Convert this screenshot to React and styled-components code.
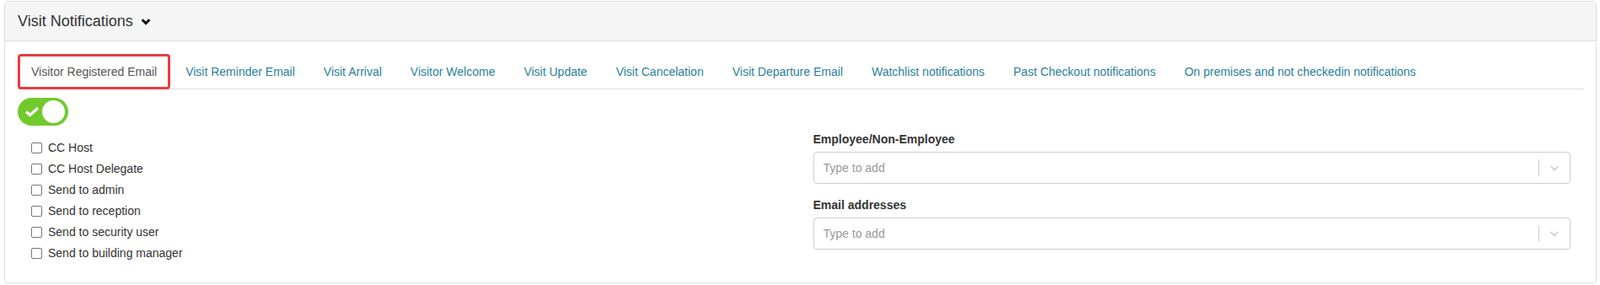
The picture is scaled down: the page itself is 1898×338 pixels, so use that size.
import React, { useState } from "react";
import styled, { createGlobalStyle } from "styled-components";

const GlobalStyle = createGlobalStyle`
  body {
    margin: 0;
    background: #fff;
    font-family: "Liberation Sans", Arial, sans-serif;
    font-size: 14px;
    line-height: 20px;
    color: #333;
  }
  * { box-sizing: border-box; }
`;

const Page = styled.div`
  padding: 1px 4px 0 5px;
`;

const Panel = styled.div`
  border: 1px solid #ddd;
  border-radius: 4px;
  background: #fff;
  overflow: hidden;
`;

const Heading = styled.div`
  height: 47px;
  padding: 0 15px;
  display: flex;
  align-items: center;
  gap: 9px;
  background: #f5f5f5;
  border-bottom: 1px solid #ddd;
  font-size: 18px;
  color: #333;
`;

const Body = styled.div`
  padding: 15px;
`;

const TabList = styled.ul`
  display: flex;
  list-style: none;
  margin: 0;
  padding: 0;
  border-bottom: 1px solid #ddd;
`;

const Tab = styled.li`
  margin: 0 2px -1px 0;
  padding: ${({ $active }) => ($active ? "8px 13px" : "10px 15px")};
  border: ${({ $active }) => ($active ? "3px solid #e83c40" : "1px solid transparent")};
  border-radius: 4px;
  color: ${({ $active }) => ($active ? "#555" : "#2a7f9f")};
  white-space: nowrap;
  cursor: pointer;
`;

const Toggle = styled.div`
  margin-top: 10px;
  width: 60px;
  height: 33px;
  border-radius: 17px;
  background: #72c92c;
  display: flex;
  align-items: center;
  justify-content: space-between;
  padding: 0 4px 0 8px;
`;

const Knob = styled.div`
  width: 27px;
  height: 27px;
  border-radius: 50%;
  background: #fff;
`;

const Row = styled.div`
  display: grid;
  grid-template-columns: 1fr 1fr;
  margin: 6px -15px 0;
`;

const Col = styled.div`
  padding: 0 ${({ $wide }) => ($wide ? "30px" : "15px")} 0 15px;
`;

const CheckList = styled.div`
  margin: 10px 0;
  padding-left: 15px;
  display: flex;
  flex-direction: column;
  gap: 5px;
`;

const CheckRow = styled.label`
  display: flex;
  align-items: center;
  height: 20px;
  color: #333;
`;

const Box = styled.input`
  appearance: none;
  width: 13px;
  height: 13px;
  margin: 0 7px 0 1px;
  border: 1px solid #767676;
  border-radius: 2px;
  background: #fff;
`;

const FormGroup = styled.div`
  margin-bottom: 15px;
`;

const Label = styled.div`
  font-weight: bold;
  margin-bottom: 5px;
`;

const Select = styled.div`
  height: 38px;
  border: 1px solid #ccc;
  border-radius: 4px;
  display: flex;
  align-items: center;
`;

const Placeholder = styled.div`
  flex: 1;
  padding-left: 11px;
  color: #999;
`;

const Separator = styled.span`
  width: 1px;
  height: 20px;
  background: #ccc;
`;

const Indicator = styled.div`
  padding: 8px;
  display: flex;
  color: #ccc;
`;

const tabs = [
  "Visitor Registered Email",
  "Visit Reminder Email",
  "Visit Arrival",
  "Visitor Welcome",
  "Visit Update",
  "Visit Cancelation",
  "Visit Departure Email",
  "Watchlist notifications",
  "Past Checkout notifications",
  "On premises and not checkedin notifications",
];

const options = [
  "CC Host",
  "CC Host Delegate",
  "Send to admin",
  "Send to reception",
  "Send to security user",
  "Send to building manager",
];

function ChevronDown() {
  return (
    <svg width="12" height="9" viewBox="0 0 12 9">
      <path d="M1.6 2.2 L6 6.6 L10.4 2.2" fill="none" stroke="#111" strokeWidth="3" />
    </svg>
  );
}

function SelectBox() {
  return (
    <Select>
      <Placeholder>Type to add</Placeholder>
      <Separator />
      <Indicator>
        <svg width="20" height="20" viewBox="0 0 20 20">
          <path d="M5.5 8 L10 12.5 L14.5 8" fill="none" stroke="currentColor" strokeWidth="1.6" />
        </svg>
      </Indicator>
    </Select>
  );
}

export default function App() {
  const [active, setActive] = useState(0);

  return (
    <Page>
      <GlobalStyle />
      <Panel>
        <Heading>
          Visit Notifications <ChevronDown />
        </Heading>
        <Body>
          <TabList>
            {tabs.map((t, i) => (
              <Tab key={t} $active={i === active} onClick={() => setActive(i)}>
                {t}
              </Tab>
            ))}
          </TabList>
          <Toggle>
            <svg width="18" height="13" viewBox="0 0 18 13">
              <path d="M2 6.5 L6.5 10.5 L16 2" fill="none" stroke="#fff" strokeWidth="3.2" />
            </svg>
            <Knob />
          </Toggle>
          <Row>
            <Col>
              <CheckList>
                {options.map((o) => (
                  <CheckRow key={o}>
                    <Box type="checkbox" />
                    {o}
                  </CheckRow>
                ))}
              </CheckList>
            </Col>
            <Col $wide>
              <FormGroup>
                <Label>Employee/Non-Employee</Label>
                <SelectBox />
              </FormGroup>
              <FormGroup>
                <Label>Email addresses</Label>
                <SelectBox />
              </FormGroup>
            </Col>
          </Row>
        </Body>
      </Panel>
    </Page>
  );
}
